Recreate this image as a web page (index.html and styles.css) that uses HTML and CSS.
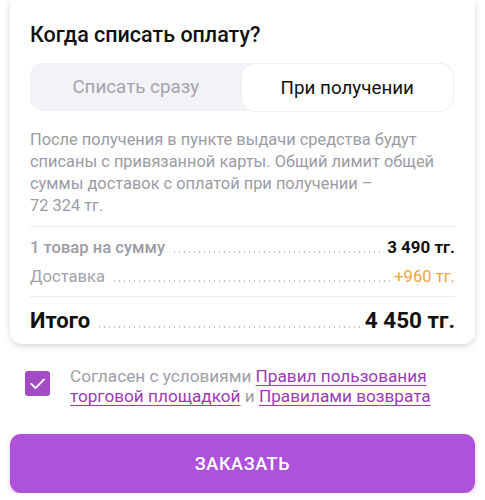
FILE: index.html
```html
<!DOCTYPE html>
<html lang="ru">
<head>
<meta charset="utf-8">
<link rel="stylesheet" href="styles.css">
</head>
<body>
<div class="page">
  <section class="card">
    <h2 class="title">Когда списать оплату?</h2>
    <div class="segmented">
      <div class="seg">Списать сразу</div>
      <div class="seg seg-active">При получении</div>
    </div>
    <p class="desc">После получения в пункте выдачи средства будут списаны с привязанной карты. Общий лимит общей суммы доставок с оплатой при получении –<br>72&nbsp;324&nbsp;тг.</p>
    <div class="rows">
      <div class="row row-goods">
        <span class="label">1 товар на сумму</span>
        <span class="dots"></span>
        <span class="value">3 490 тг.</span>
      </div>
      <div class="row row-delivery">
        <span class="label">Доставка</span>
        <span class="dots"></span>
        <span class="value">+960 тг.</span>
      </div>
    </div>
    <div class="row row-total">
      <span class="label">Итого</span>
      <span class="dots"></span>
      <span class="value">4 450 тг.</span>
    </div>
  </section>

  <div class="agree">
    <span class="checkbox">
      <svg viewBox="0 0 24 24" width="25" height="25"><path d="M6 12.3l4.1 4.1 8-8.2" fill="none" stroke="#fff" stroke-width="1.8" stroke-linecap="round" stroke-linejoin="round"/></svg>
    </span>
    <p class="agree-text">Согласен с условиями <a href="#">Правил пользования торговой площадкой</a> и <a href="#">Правилами возврата</a></p>
  </div>

  <button class="order">ЗАКАЗАТЬ</button>
</div>
</body>
</html>
```

FILE: styles.css
```css
* { box-sizing: border-box; }
html, body { margin: 0; padding: 0; background: #fff; }
body { font-family: Roboto, "Noto Sans", Arial, sans-serif; color: #111; }

.page { padding: 0 10px; }

.card {
  background: #fff;
  border-radius: 0 0 12px 12px;
  box-shadow: 0 2px 6px rgba(0, 0, 0, 0.16);
  padding: 22px 20px 0 20px;
}

.title {
  margin: 0;
  font-size: 21.5px;
  line-height: 26px;
  font-weight: 500;
  color: #121212;
}

.segmented {
  margin-top: 15px;
  height: 48px;
  display: flex;
  background: #f3f3f7;
  border-radius: 13px;
  margin-right: 2px;
}
.seg {
  flex: 1;
  display: flex;
  align-items: center;
  justify-content: center;
  font-size: 18.8px;
  color: #a3a3ad;
  border-radius: 13px;
}
.seg-active {
  background: #fff;
  color: #111;
  margin: 1px 0 0 0;
  box-shadow: 0 0 0 1px #f0f0f4;
}

.desc {
  margin: 18px 0 0 0;
  font-size: 16.4px;
  line-height: 22px;
  color: #9c9ca5;
  padding-bottom: 9px;
  border-bottom: 1px solid #ececf0;
}

.rows {
  padding: 6px 0 5px;
  border-bottom: 1px solid #ececf0;
}

.row {
  display: flex;
  align-items: baseline;
}
.row-goods, .row-delivery {
  font-size: 16.6px;
  line-height: 29px;
}
.row-goods .label { color: #9c9ca5; font-weight: 500; }
.row-goods .value { font-weight: 700; color: #111; font-size: 16.9px; }
.row-delivery .label { color: #a3a3ab; }
.row-delivery .value { color: #f0a33a; }

.dots {
  flex: 1;
  height: 2px;
  margin: 0 3px 0 7px;
  background-image: radial-gradient(circle, #c2c2c9 0.75px, transparent 1.05px);
  background-size: 5px 2px;
  background-repeat: repeat-x;
  background-position: 0 0;
}

.row-total {
  font-size: 22px;
  line-height: 28px;
  font-weight: 700;
  padding: 9px 0 9px;
}
.row-total .label, .row-total .value { color: #111; }
.row-total .value { font-size: 22.5px; }

.agree {
  display: flex;
  align-items: flex-start;
  gap: 20px;
  padding: 0 10px 0 15px;
  margin-top: 22px;
}
.checkbox {
  flex: none;
  width: 25px;
  height: 25px;
  margin-top: 5px;
  background: #a34bc5;
  border-radius: 3px;
  display: flex;
}
.agree-text {
  margin: 0;
  font-size: 17.2px;
  line-height: 20px;
  color: #a0a0a9;
}
.agree-text a {
  color: #9a3db4;
  text-decoration: underline;
  text-underline-offset: 3px;
  text-decoration-thickness: 1.3px;
}

.order {
  display: block;
  width: 100%;
  margin-top: 28px;
  height: 59px;
  border: none;
  border-radius: 11px;
  background: #ae52dc;
  color: #fff;
  font-family: Roboto, "Noto Sans", Arial, sans-serif;
  font-size: 18px;
  font-weight: 500;
  letter-spacing: 0.6px;
  box-shadow: 0 2px 5px rgba(150, 60, 190, 0.3);
}
```
